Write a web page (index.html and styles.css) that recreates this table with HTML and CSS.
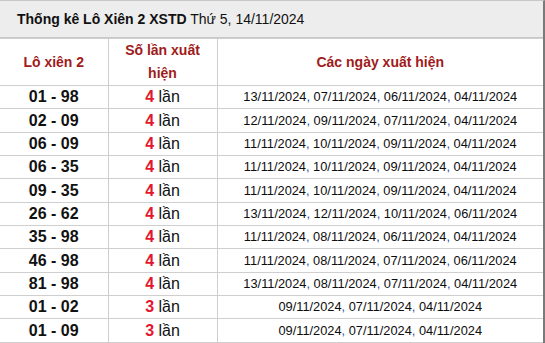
FILE: index.html
```html
<!DOCTYPE html>
<html>
<head>
<meta charset="utf-8">
<link rel="stylesheet" href="styles.css">
</head>
<body>
<div class="wrap">
  <div class="title"><b>Thống kê Lô Xiên 2 XSTD</b> Thứ 5, 14/11/2024</div>
  <table class="tbl">
    <colgroup><col class="c1"><col class="c2"><col class="c3"></colgroup>
    <thead>
      <tr><th>Lô xiên 2</th><th>Số lần xuất<br>hiện</th><th>Các ngày xuất hiện</th></tr>
    </thead>
    <tbody>
      <tr><td class="pair">01 - 98</td><td class="cnt"><b>4</b> lần</td><td class="dates">13/11/2024<i>,</i> 07/11/2024<i>,</i> 06/11/2024<i>,</i> 04/11/2024</td></tr>
      <tr><td class="pair">02 - 09</td><td class="cnt"><b>4</b> lần</td><td class="dates">12/11/2024<i>,</i> 09/11/2024<i>,</i> 07/11/2024<i>,</i> 04/11/2024</td></tr>
      <tr><td class="pair">06 - 09</td><td class="cnt"><b>4</b> lần</td><td class="dates">11/11/2024<i>,</i> 10/11/2024<i>,</i> 09/11/2024<i>,</i> 04/11/2024</td></tr>
      <tr><td class="pair">06 - 35</td><td class="cnt"><b>4</b> lần</td><td class="dates">11/11/2024<i>,</i> 10/11/2024<i>,</i> 09/11/2024<i>,</i> 04/11/2024</td></tr>
      <tr><td class="pair">09 - 35</td><td class="cnt"><b>4</b> lần</td><td class="dates">11/11/2024<i>,</i> 10/11/2024<i>,</i> 09/11/2024<i>,</i> 04/11/2024</td></tr>
      <tr><td class="pair">26 - 62</td><td class="cnt"><b>4</b> lần</td><td class="dates">13/11/2024<i>,</i> 12/11/2024<i>,</i> 10/11/2024<i>,</i> 06/11/2024</td></tr>
      <tr><td class="pair">35 - 98</td><td class="cnt"><b>4</b> lần</td><td class="dates">11/11/2024<i>,</i> 08/11/2024<i>,</i> 06/11/2024<i>,</i> 04/11/2024</td></tr>
      <tr><td class="pair">46 - 98</td><td class="cnt"><b>4</b> lần</td><td class="dates">11/11/2024<i>,</i> 08/11/2024<i>,</i> 07/11/2024<i>,</i> 06/11/2024</td></tr>
      <tr><td class="pair">81 - 98</td><td class="cnt"><b>4</b> lần</td><td class="dates">13/11/2024<i>,</i> 08/11/2024<i>,</i> 07/11/2024<i>,</i> 04/11/2024</td></tr>
      <tr><td class="pair">01 - 02</td><td class="cnt"><b>3</b> lần</td><td class="dates">09/11/2024<i>,</i> 07/11/2024<i>,</i> 04/11/2024</td></tr>
      <tr><td class="pair">01 - 09</td><td class="cnt"><b>3</b> lần</td><td class="dates">09/11/2024<i>,</i> 07/11/2024<i>,</i> 04/11/2024</td></tr>
    </tbody>
  </table>
</div>
</body>
</html>
```
FILE: styles.css
```css
html, body {
  margin: 0;
  padding: 0;
  background: #fff;
}
body {
  font-family: "Liberation Sans", Arial, sans-serif;
  color: #111;
}
.wrap {
  width: 543px;
  border-right: 2px solid #7a7a7a;
  border-top: 1px solid #c8c8c8;
}
.title {
  height: 36px;
  line-height: 36px;
  background: #eeeded;
  border-bottom: 1px solid #c8c8c8;
  padding-left: 17px;
  font-size: 14px;
  color: #111;
  white-space: nowrap;
}
.title b {
  font-weight: bold;
}
.tbl {
  width: 543px;
  border-collapse: collapse;
  table-layout: fixed;
}
.c1 { width: 108px; }
.c2 { width: 109px; }
.c3 { width: 326px; }
.tbl th, .tbl td {
  border: 1px solid #cfcfcf;
  text-align: center;
  padding: 0;
}
.tbl tr > :first-child { border-left: none; }
.tbl tr > :last-child { border-right: none; }
.tbl th {
  height: 44px;
  color: #a01b1b;
  font-size: 14px;
  font-weight: bold;
  line-height: 23px;
}
.tbl td {
  height: 22.35px;
  line-height: 20px;
}
.pair {
  font-size: 16px;
  font-weight: bold;
  color: #111;
}
.cnt {
  font-size: 16px;
  color: #111;
}
.cnt b {
  color: #e3162d;
}
.dates {
  font-size: 12.8px;
  color: #0d0d0d;
}
.dates i {
  font-style: normal;
  color: #3a4fa0;
}
```
